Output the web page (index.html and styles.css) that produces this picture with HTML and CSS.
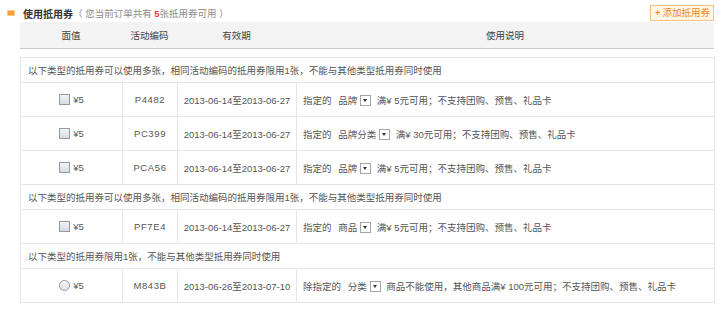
FILE: index.html
```html
<!DOCTYPE html>
<html>
<head>
  <title>使用抵用券</title>
  <link rel="stylesheet" href="styles.css">
</head>
<body>
  <div class="coupon-box">
    <div class="box-head">
      <span class="fold-icon">
        <svg width="8" height="6" viewBox="0 0 8 6"><rect x="0.5" y="0.5" width="7" height="5" fill="#f7a233" stroke="#f9c98a"/></svg>
      </span>
      <b class="title">使用抵用券</b>
      <span class="tip">（ 您当前订单共有 <em>5</em>张抵用券可用 ）</span>
      <a class="add-btn" href="#"><b>+</b>添加抵用券</a>
    </div>

    <table class="head-table">
      <colgroup>
        <col class="c1"><col class="c2"><col class="c3"><col class="c4">
      </colgroup>
      <tr>
        <th>面值</th>
        <th>活动编码</th>
        <th>有效期</th>
        <th>使用说明</th>
      </tr>
    </table>

    <table class="coupon-table">
      <colgroup>
        <col class="c1"><col class="c2"><col class="c3"><col class="c4">
      </colgroup>
      <tr class="group">
        <td colspan="4">以下类型的抵用券可以使用多张，相同活动编码的抵用券限用1张，不能与其他类型抵用券同时使用</td>
      </tr>
      <tr class="item">
        <td class="face"><span class="check"></span>¥5</td>
        <td class="code">P4482</td>
        <td>2013-06-14至2013-06-27</td>
        <td class="desc">指定的 <span class="kind">品牌</span><span class="drop"></span> 满¥ 5元可用；不支持团购、预售、礼品卡</td>
      </tr>
      <tr class="item">
        <td class="face"><span class="check"></span>¥5</td>
        <td class="code">PC399</td>
        <td>2013-06-14至2013-06-27</td>
        <td class="desc">指定的 <span class="kind">品牌分类</span><span class="drop"></span> 满¥ 30元可用；不支持团购、预售、礼品卡</td>
      </tr>
      <tr class="item">
        <td class="face"><span class="check"></span>¥5</td>
        <td class="code">PCA56</td>
        <td>2013-06-14至2013-06-27</td>
        <td class="desc">指定的 <span class="kind">品牌</span><span class="drop"></span> 满¥ 5元可用；不支持团购、预售、礼品卡</td>
      </tr>
      <tr class="group">
        <td colspan="4">以下类型的抵用券可以使用多张，相同活动编码的抵用券限用1张，不能与其他类型抵用券同时使用</td>
      </tr>
      <tr class="item">
        <td class="face"><span class="check"></span>¥5</td>
        <td class="code">PF7E4</td>
        <td>2013-06-14至2013-06-27</td>
        <td class="desc">指定的 <span class="kind">商品</span><span class="drop"></span> 满¥ 5元可用；不支持团购、预售、礼品卡</td>
      </tr>
      <tr class="group">
        <td colspan="4">以下类型的抵用券限用1张，不能与其他类型抵用券同时使用</td>
      </tr>
      <tr class="item">
        <td class="face"><span class="radio"></span>¥5</td>
        <td class="code">M843B</td>
        <td>2013-06-26至2013-07-10</td>
        <td class="desc">除指定的 <span class="kind">分类</span><span class="drop"></span> 商品不能使用，其他商品满¥ 100元可用；不支持团购、预售、礼品卡</td>
      </tr>
    </table>
  </div>
</body>
</html>
```

FILE: styles.css
```css
body {
  margin: 0;
  background: #ffffff;
  font-family: "Liberation Sans", "Noto Sans CJK SC", sans-serif;
  font-size: 9.5px;
  color: #444;
}

.coupon-box {
  padding: 5px 8px 0 7px;
}

.box-head {
  display: flex;
  align-items: center;
  height: 16px;
}

.fold-icon {
  display: flex;
  margin-right: 8px;
}

.title {
  color: #333;
  font-weight: bold;
  font-size: 10px;
}

.tip {
  color: #8c8c8c;
}

.tip em {
  font-style: normal;
  font-weight: bold;
  color: #e4393c;
}

.add-btn {
  margin-left: auto;
  height: 14px;
  line-height: 14px;
  padding: 0 3px 0 4px;
  border: 1px solid #f5c37c;
  background: #fff7e3;
  color: #f08a1c;
  text-decoration: none;
}

.add-btn b {
  margin-right: 2px;
}

table {
  width: 694px;
  margin-left: 13px;
  border-collapse: collapse;
  table-layout: fixed;
}

col.c1 { width: 102px; }
col.c2 { width: 55px; }
col.c3 { width: 119px; }
col.c4 { width: 418px; }

.head-table {
  margin-top: 1px;
}

.head-table th {
  height: 26px;
  padding: 0;
  background: #f3f3f3;
  border-bottom: 1px solid #c9c9c9;
  font-weight: normal;
  color: #444;
}

.coupon-table {
  margin-top: 8px;
  border: 1px solid #e6e6e6;
}

.coupon-table td {
  border: 1px solid #e6e6e6;
  padding: 0;
  text-align: center;
  color: #555;
}

.group td {
  height: 24px;
  text-align: left;
  padding-left: 7px;
}

.item td {
  height: 33px;
}

.coupon-table td.code {
  letter-spacing: 0.6px;
}

.coupon-table td.desc {
  text-align: left;
  padding-left: 6px;
}

.face {
  white-space: nowrap;
}

.check {
  display: inline-block;
  width: 9px;
  height: 9px;
  margin-right: 3px;
  vertical-align: -2px;
  border: 1px solid #8f9aa6;
  background: linear-gradient(#f2f4f6, #d6dbe0);
}

.radio {
  display: inline-block;
  width: 9px;
  height: 9px;
  margin-right: 3px;
  vertical-align: -2px;
  border: 1px solid #8f9aa6;
  border-radius: 50%;
  background: linear-gradient(#f7f8f9, #dfe3e7);
}

.kind {
  margin-left: 4px;
  margin-right: 3px;
}

.drop {
  display: inline-block;
  position: relative;
  width: 9px;
  height: 9px;
  vertical-align: -2px;
  border: 1px solid #a6a6a6;
  background: #fff;
  margin-right: 3px;
}

.drop::after {
  content: "";
  position: absolute;
  left: 2px;
  top: 3px;
  border-left: 2.5px solid transparent;
  border-right: 2.5px solid transparent;
  border-top: 3px solid #333;
}
```
